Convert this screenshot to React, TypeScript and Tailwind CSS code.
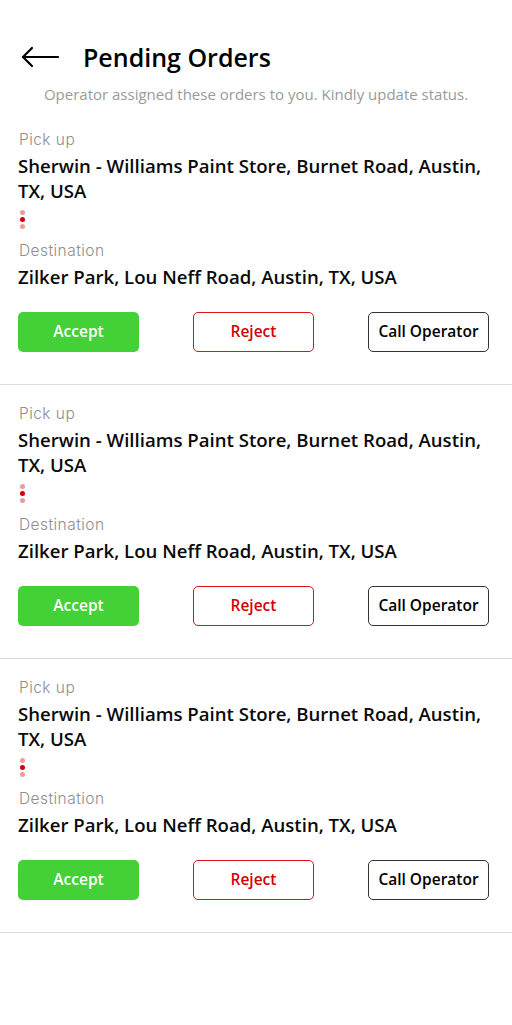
import React from 'react';

const orders = [1, 2, 3].map((id) => ({
  id,
  pickup: 'Sherwin - Williams Paint Store, Burnet Road, Austin, TX, USA',
  destination: 'Zilker Park, Lou Neff Road, Austin, TX, USA',
}));

const BackArrow = () => (
  <svg width="38" height="22" viewBox="0 0 38 22" fill="none" stroke="#000" strokeWidth="2.2" strokeLinecap="round" strokeLinejoin="round">
    <path d="M37 11H2" />
    <path d="M11 2L2 11L11 20" />
  </svg>
);

const OrderCard = ({ pickup, destination }: { pickup: string; destination: string }) => {
  return (
    <div className="border-b border-[#dcdcdc] px-[18px] pt-[19px] pb-[32px]">
      <p className="ml-[1px] text-[15.5px] leading-[20px] font-light tracking-[0.45px] text-[#8e8e8e]">Pick up</p>
      <p className="mt-[3px] text-[18.6px] leading-[25px] font-semibold text-[#0a0a0a] font-['Open_Sans',sans-serif] pr-1">
        {pickup}
      </p>
      <div className="flex flex-col gap-[2px] pl-[2px] pt-[7px] pb-[8px]">
        <span className="w-[5px] h-[5px] rounded-full bg-[#ef9a9a]" />
        <span className="w-[5px] h-[5px] rounded-full bg-[#d40000]" />
        <span className="w-[5px] h-[5px] rounded-full bg-[#ef9a9a]" />
      </div>
      <p className="ml-[1px] mt-[4px] text-[15.5px] leading-[20px] font-light tracking-[0.45px] text-[#8e8e8e]">Destination</p>
      <p className="mt-[3px] text-[18.6px] leading-[25px] font-semibold text-[#0a0a0a] font-['Open_Sans',sans-serif]">
        {destination}
      </p>
      <div className="mt-[23px] flex items-center justify-between pr-[5px]">
        <button className="w-[121px] h-[40px] rounded-[5px] bg-[#44d037] text-white text-[15.5px] font-semibold font-['Open_Sans',sans-serif]">
          Accept
        </button>
        <button className="w-[121px] h-[40px] rounded-[5px] border border-[#d81414] text-[#d40000] text-[15.5px] font-semibold font-['Open_Sans',sans-serif]">
          Reject
        </button>
        <button className="w-[121px] h-[40px] rounded-[5px] border border-[#333] text-black text-[15.5px] font-semibold font-['Open_Sans',sans-serif]">
          Call Operator
        </button>
      </div>
    </div>
  );
};

export default function App() {
  return (
    <div className="w-[512px] min-h-[1025px] bg-white font-['Inter',sans-serif]">
      <div className="flex items-center gap-[24px] pl-[21px] pt-[41px]">
        <BackArrow />
        <h1 className="text-[25px] leading-[32px] font-semibold text-black font-['Open_Sans',sans-serif]">Pending Orders</h1>
      </div>
      <p className="mt-[11px] text-center text-[15px] leading-[20px] text-[#9a9a9a] font-['Open_Sans',sans-serif]">
        Operator assigned these orders to you. Kindly update status.
      </p>
      <div className="mt-[7px]">
        {orders.map((o) => (
          <OrderCard key={o.id} pickup={o.pickup} destination={o.destination} />
        ))}
      </div>
    </div>
  );
}
